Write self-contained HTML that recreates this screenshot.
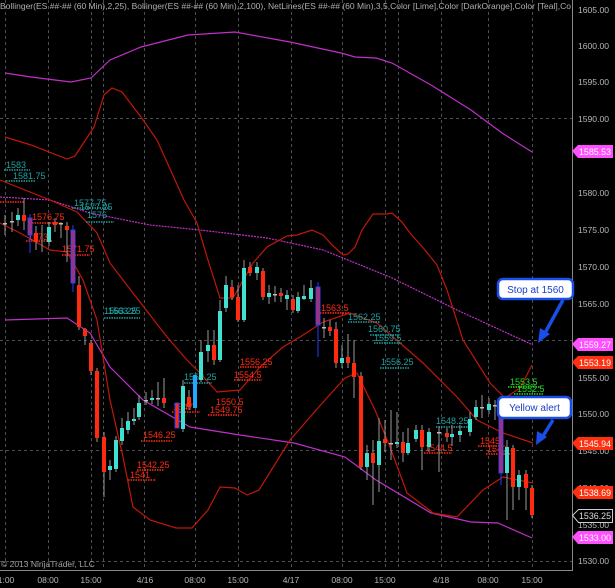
<!DOCTYPE html>
<html><head><meta charset="utf-8"><style>
html,body{margin:0;padding:0;background:#000;width:615px;height:588px;overflow:hidden}
svg{display:block}
text{font-family:"Liberation Sans",sans-serif}
</style></head><body>
<svg width="615" height="588" viewBox="0 0 615 588" xmlns="http://www.w3.org/2000/svg">
<rect width="615" height="588" fill="#000"/>
<g stroke="#4a4f55" stroke-width="1" stroke-dasharray="3,3">
<line x1="5.5" y1="0" x2="5.5" y2="570"/><line x1="48.5" y1="0" x2="48.5" y2="570"/><line x1="91.5" y1="0" x2="91.5" y2="570"/>
<line x1="103.5" y1="0" x2="103.5" y2="570"/><line x1="144.5" y1="0" x2="144.5" y2="570"/><line x1="195.5" y1="0" x2="195.5" y2="570"/>
<line x1="238.5" y1="0" x2="238.5" y2="570"/><line x1="291.5" y1="0" x2="291.5" y2="570"/><line x1="342.5" y1="0" x2="342.5" y2="570"/>
<line x1="385.5" y1="0" x2="385.5" y2="570"/><line x1="398.5" y1="0" x2="398.5" y2="570"/><line x1="441.5" y1="0" x2="441.5" y2="570"/>
<line x1="488.5" y1="0" x2="488.5" y2="570"/><line x1="532.5" y1="0" x2="532.5" y2="570"/>
<line x1="0" y1="118.5" x2="572" y2="118.5"/><line x1="0" y1="340.5" x2="572" y2="340.5"/><line x1="0" y1="450.5" x2="572" y2="450.5"/><line x1="0" y1="561.5" x2="572" y2="561.5"/>
</g>
<line x1="572.5" y1="0" x2="572.5" y2="571" stroke="#888"/>
<line x1="0" y1="570.5" x2="573" y2="570.5" stroke="#888"/>
<g fill="#b8b8b8" font-size="8.5">
<text x="578" y="13" textLength="31" lengthAdjust="spacingAndGlyphs">1605.00</text>
<text x="578" y="49" textLength="31" lengthAdjust="spacingAndGlyphs">1600.00</text>
<text x="578" y="85" textLength="31" lengthAdjust="spacingAndGlyphs">1595.00</text>
<text x="578" y="122" textLength="31" lengthAdjust="spacingAndGlyphs">1590.00</text>
<text x="578" y="196" textLength="31" lengthAdjust="spacingAndGlyphs">1580.00</text>
<text x="578" y="233" textLength="31" lengthAdjust="spacingAndGlyphs">1575.00</text>
<text x="578" y="270" textLength="31" lengthAdjust="spacingAndGlyphs">1570.00</text>
<text x="578" y="307" textLength="31" lengthAdjust="spacingAndGlyphs">1565.00</text>
<text x="578" y="381" textLength="31" lengthAdjust="spacingAndGlyphs">1555.00</text>
<text x="578" y="417" textLength="31" lengthAdjust="spacingAndGlyphs">1550.00</text>
<text x="578" y="454" textLength="31" lengthAdjust="spacingAndGlyphs">1545.00</text>
<text x="578" y="491" textLength="31" lengthAdjust="spacingAndGlyphs">1540.00</text>
<text x="578" y="528" textLength="31" lengthAdjust="spacingAndGlyphs">1535.00</text>
<text x="578" y="564" textLength="31" lengthAdjust="spacingAndGlyphs">1530.00</text>
</g>
<g fill="none" stroke-width="1.2">
<polyline stroke="#c030c8" points="5,73 31,77 71,82 91,78 110,60 141,47 188,35 235,32 290,42 341,53 355,57 376,58 392,63 431,85 471,110 502,133 532,152"/>
<polyline stroke="#c030c8" stroke-dasharray="2,1" points="0,197 50,200 90,213 150,225 200,230 267,238 300,245 323,250 390,277 457,310 533,345"/>
<polyline stroke="#c030c8" points="5,320 67,318 90,333 110,367 143,400 190,427 240,435 294,443 345,457 376,480 431,513 471,522 498,523 532,538"/>
<polyline stroke="#c01808" points="5,137 31,145 67,159 75,156 94,127 104,95 112,88 122,92 141,117 157,140 184,200 197,223 207,257 220,298 233,298 253,263 267,247 287,236 297,235 312,230 323,235 332,245 343,255 348,254 355,247 362,230 373,214 387,214 392,213 402,222 410,233 425,250 437,265 447,290 463,340 490,383 505,398 520,388 532,365"/>
<polyline stroke="#c01808" points="0,180 50,200 77,212 97,233 110,263 133,293 167,337 187,360 200,373 217,392 240,390 260,367 283,347 300,337 323,322 350,313 377,323 423,363 457,397 477,420 503,433 533,443"/>
<polyline stroke="#c01808" points="0,223 20,233 50,250 67,252 83,280 97,320 110,400 123,457 133,507 150,520 176,528 192,528 208,510 220,487 235,488 247,495 259,490 290,440 325,400 345,378 357,373 375,410 390,447 407,493 433,513 457,517 483,490 503,477 533,483"/>
</g>
<g font-size="9">
<g fill="#1fa0a0">
<text x="6" y="168">1583</text><text x="13" y="179">1581.75</text>
<text x="74" y="206">1577.75</text><text x="80" y="210">1577.25</text><text x="87" y="218">1576</text>
<text x="104" y="314">1563.25</text><text x="108" y="314">1563.25</text>
<text x="184" y="380">1552.25</text>
<text x="348" y="320">1562.25</text><text x="368" y="332">1560.75</text><text x="374" y="341">1559.5</text>
<text x="381" y="365">1556.25</text><text x="436" y="424">1548.25</text>
</g>
<g fill="#ff2a10">
<text x="32" y="220">1576.75</text><text x="28" y="240">1573</text><text x="62" y="252">1571.75</text>
<text x="240" y="365">1556.25</text><text x="234" y="378">1554.5</text><text x="216" y="405">1550.5</text><text x="210" y="413">1549.75</text>
<text x="173" y="410">1547</text><text x="143" y="438">1546.25</text><text x="137" y="468">1542.25</text><text x="130" y="478">1541</text>
<text x="321" y="311">1563.5</text><text x="425" y="451">1544.5</text><text x="480" y="444">1545.</text><text x="487" y="452">1540</text>
</g>
<g fill="#20e020"><text x="510" y="385">1553.5</text><text x="517" y="392">1552.5</text></g>
</g>
<g fill="none" stroke-width="1.5" stroke-dasharray="1.5,1">
<g stroke="#1fa0a0">
<line x1="4" y1="170" x2="30" y2="170"/><line x1="6" y1="181" x2="36" y2="181"/><line x1="72" y1="208" x2="110" y2="208"/><line x1="86" y1="222" x2="114" y2="222"/>
<line x1="104" y1="318" x2="140" y2="318"/><line x1="184" y1="383" x2="212" y2="383"/><line x1="348" y1="322" x2="380" y2="322"/><line x1="370" y1="335" x2="400" y2="335"/><line x1="374" y1="343" x2="402" y2="343"/><line x1="380" y1="368" x2="410" y2="368"/><line x1="436" y1="427" x2="468" y2="427"/>
</g>
<g stroke="#ff2a10">
<line x1="0" y1="202" x2="24" y2="202"/><line x1="32" y1="223" x2="60" y2="223"/><line x1="26" y1="241" x2="52" y2="241"/><line x1="62" y1="255" x2="90" y2="255"/>
<line x1="240" y1="367" x2="268" y2="367"/><line x1="234" y1="380" x2="262" y2="380"/><line x1="208" y1="415" x2="238" y2="415"/><line x1="172" y1="412" x2="200" y2="412"/>
<line x1="141" y1="441" x2="172" y2="441"/><line x1="137" y1="470" x2="164" y2="470"/><line x1="128" y1="480" x2="156" y2="480"/>
<line x1="320" y1="313" x2="350" y2="313"/><line x1="424" y1="453" x2="452" y2="453"/><line x1="478" y1="446" x2="500" y2="446"/><line x1="486" y1="454" x2="510" y2="454"/>
</g>
<g stroke="#20e020"><line x1="508" y1="387" x2="540" y2="387"/><line x1="514" y1="394" x2="544" y2="394"/></g>
</g>
<g stroke="#9a9a9a" stroke-width="1">
<line x1="5" y1="215" x2="5" y2="235"/><line x1="12" y1="212" x2="12" y2="232"/><line x1="18" y1="208" x2="18" y2="226"/><line x1="24" y1="198" x2="24" y2="230"/>
<line x1="36" y1="226" x2="36" y2="250"/><line x1="42" y1="225" x2="42" y2="252"/><line x1="49" y1="222" x2="49" y2="246"/><line x1="55" y1="218" x2="55" y2="232"/><line x1="61" y1="222" x2="61" y2="238"/><line x1="67" y1="222" x2="67" y2="262"/>
<line x1="79" y1="276" x2="79" y2="330"/><line x1="85" y1="328" x2="85" y2="345"/><line x1="91" y1="340" x2="91" y2="375"/><line x1="97" y1="368" x2="97" y2="442"/><line x1="104" y1="432" x2="104" y2="497"/>
<line x1="110" y1="460" x2="110" y2="480"/><line x1="116" y1="436" x2="116" y2="472"/><line x1="122" y1="418" x2="122" y2="445"/><line x1="128" y1="412" x2="128" y2="434"/><line x1="134" y1="408" x2="134" y2="425"/><line x1="139" y1="395" x2="139" y2="420"/>
<line x1="146" y1="392" x2="146" y2="405"/><line x1="152" y1="390" x2="152" y2="404"/><line x1="158" y1="382" x2="158" y2="406"/><line x1="164" y1="378" x2="164" y2="408"/>
<line x1="183" y1="380" x2="183" y2="432"/><line x1="189" y1="390" x2="189" y2="410"/><line x1="201" y1="340" x2="201" y2="382"/><line x1="208" y1="330" x2="208" y2="362"/><line x1="214" y1="330" x2="214" y2="365"/>
<line x1="220" y1="300" x2="220" y2="362"/><line x1="226" y1="276" x2="226" y2="312"/><line x1="232" y1="280" x2="232" y2="300"/><line x1="238" y1="285" x2="238" y2="322"/><line x1="244" y1="260" x2="244" y2="322"/>
<line x1="250" y1="262" x2="250" y2="276"/><line x1="257" y1="262" x2="257" y2="280"/><line x1="263" y1="268" x2="263" y2="300"/><line x1="269" y1="285" x2="269" y2="304"/><line x1="275" y1="286" x2="275" y2="302"/><line x1="281" y1="288" x2="281" y2="302"/><line x1="287" y1="290" x2="287" y2="310"/>
<line x1="293" y1="295" x2="293" y2="313"/><line x1="298" y1="292" x2="298" y2="313"/><line x1="304" y1="285" x2="304" y2="300"/><line x1="311" y1="280" x2="311" y2="302"/>
<line x1="324" y1="318" x2="324" y2="338"/><line x1="330" y1="320" x2="330" y2="336"/><line x1="336" y1="322" x2="336" y2="368"/><line x1="342" y1="345" x2="342" y2="368"/><line x1="348" y1="334" x2="348" y2="368"/><line x1="354" y1="340" x2="354" y2="398"/>
<line x1="361" y1="372" x2="361" y2="470"/><line x1="367" y1="445" x2="367" y2="480"/><line x1="373" y1="440" x2="373" y2="505"/><line x1="379" y1="418" x2="379" y2="492"/><line x1="385" y1="420" x2="385" y2="452"/><line x1="391" y1="410" x2="391" y2="460"/>
<line x1="397" y1="412" x2="397" y2="448"/><line x1="403" y1="432" x2="403" y2="462"/><line x1="408" y1="428" x2="408" y2="455"/><line x1="416" y1="425" x2="416" y2="442"/><line x1="422" y1="425" x2="422" y2="470"/><line x1="429" y1="428" x2="429" y2="452"/>
<line x1="439" y1="426" x2="439" y2="472"/><line x1="447" y1="428" x2="447" y2="442"/><line x1="452" y1="425" x2="452" y2="446"/><line x1="460" y1="425" x2="460" y2="442"/><line x1="470" y1="412" x2="470" y2="436"/><line x1="476" y1="400" x2="476" y2="420"/>
<line x1="482" y1="395" x2="482" y2="418"/><line x1="489" y1="398" x2="489" y2="414"/><line x1="495" y1="400" x2="495" y2="420"/><line x1="507" y1="440" x2="507" y2="520"/><line x1="513" y1="445" x2="513" y2="510"/><line x1="519" y1="470" x2="519" y2="500"/><line x1="526" y1="470" x2="526" y2="510"/><line x1="532" y1="485" x2="532" y2="518"/>
</g>
<g fill="#ff2a10">
<rect x="22" y="215" width="4" height="6"/><rect x="34" y="233" width="4" height="9"/><rect x="53" y="222" width="4" height="3"/><rect x="65" y="226" width="4" height="4"/>
<rect x="77" y="285" width="4" height="42"/><rect x="83" y="329" width="4" height="7"/><rect x="89" y="343" width="4" height="28"/><rect x="95" y="371" width="4" height="67"/><rect x="102" y="437" width="4" height="35"/>
<rect x="162" y="398" width="4" height="5"/><rect x="187" y="397" width="4" height="10"/><rect x="212" y="345" width="4" height="15"/><rect x="230" y="287" width="4" height="10"/><rect x="236" y="297" width="4" height="23"/>
<rect x="248" y="267" width="4" height="6"/><rect x="261" y="271" width="4" height="26"/><rect x="279" y="293" width="4" height="3"/><rect x="291" y="299" width="4" height="11"/>
<rect x="328" y="327" width="4" height="4"/><rect x="334" y="329" width="4" height="34"/><rect x="346" y="357" width="4" height="6"/><rect x="352" y="363" width="4" height="14"/><rect x="359" y="376" width="4" height="91"/>
<rect x="371" y="453" width="4" height="10"/><rect x="383" y="439" width="4" height="4"/><rect x="401" y="442" width="4" height="11"/><rect x="420" y="430" width="4" height="17"/><rect x="445" y="433" width="4" height="4"/>
<rect x="511" y="448" width="4" height="39"/><rect x="524" y="474" width="4" height="14"/><rect x="530" y="488" width="4" height="27"/>
</g>
<g fill="#ff2a10" stroke="#2040ff" stroke-width="1">
<rect x="28" y="218" width="4" height="17"/><rect x="71" y="230" width="4" height="53"/><rect x="175" y="403" width="4" height="25"/><rect x="316" y="287" width="4" height="38"/><rect x="499" y="418" width="4" height="55"/>
</g>
<line x1="30" y1="214" x2="30" y2="253" stroke="#2040ff"/><line x1="73" y1="225" x2="73" y2="292" stroke="#2040ff"/><line x1="318" y1="282" x2="318" y2="357" stroke="#2040ff"/><line x1="501" y1="410" x2="501" y2="485" stroke="#2040ff"/>
<g fill="#40e0d0">
<rect x="16" y="215" width="4" height="5"/><rect x="47" y="227" width="4" height="15"/><rect x="108" y="466" width="4" height="4"/><rect x="114" y="440" width="4" height="29"/><rect x="120" y="428" width="4" height="13"/>
<rect x="126" y="421" width="4" height="9"/><rect x="132" y="419" width="4" height="2"/><rect x="137" y="403" width="4" height="14"/><rect x="150" y="398" width="4" height="2"/><rect x="181" y="386" width="4" height="43"/>
<rect x="199" y="352" width="4" height="28"/><rect x="206" y="345" width="4" height="6"/><rect x="218" y="311" width="4" height="49"/><rect x="224" y="285" width="4" height="23"/><rect x="242" y="268" width="4" height="52"/>
<rect x="255" y="267" width="4" height="6"/><rect x="267" y="293" width="4" height="4"/><rect x="285" y="295" width="4" height="4"/><rect x="296" y="297" width="4" height="14"/><rect x="302" y="296" width="4" height="3"/><rect x="309" y="288" width="4" height="11"/>
<rect x="340" y="358" width="4" height="5"/><rect x="365" y="453" width="4" height="14"/><rect x="377" y="441" width="4" height="24"/><rect x="395" y="442" width="4" height="2"/><rect x="406" y="443" width="4" height="10"/>
<rect x="414" y="430" width="4" height="9"/><rect x="427" y="432" width="4" height="15"/><rect x="450" y="434" width="4" height="3"/><rect x="458" y="431" width="4" height="4"/><rect x="468" y="419" width="4" height="13"/>
<rect x="474" y="407" width="4" height="10"/><rect x="487" y="404" width="4" height="6"/><rect x="505" y="447" width="4" height="26"/><rect x="517" y="475" width="4" height="12"/>
</g>
<rect x="193" y="375" width="4" height="33" fill="#20a8ff"/>
<g fill="#bbb"><rect x="3" y="223" width="4" height="1.5"/><rect x="10" y="221" width="4" height="1.5"/><rect x="59" y="223" width="4" height="1.5"/><rect x="144" y="400" width="4" height="1.5"/><rect x="156" y="398" width="4" height="1.5"/><rect x="273" y="294" width="4" height="1.5"/><rect x="322" y="327" width="4" height="1.5"/><rect x="389" y="443" width="4" height="1.5"/><rect x="437" y="432" width="4" height="1.5"/><rect x="480" y="407" width="4" height="1.5"/><rect x="493" y="405" width="4" height="1.5"/></g>
<g font-size="9">
<path d="M572,151 L578,145 L613,145 L613,158 L578,158 Z" fill="#ff50ff"/><text x="579" y="155" fill="#fff" textLength="32" lengthAdjust="spacingAndGlyphs">1585.53</text>
<path d="M572,344 L578,338 L613,338 L613,351 L578,351 Z" fill="#ff50ff"/><text x="579" y="348" fill="#fff" textLength="32" lengthAdjust="spacingAndGlyphs">1559.27</text>
<path d="M572,362 L578,356 L613,356 L613,369 L578,369 Z" fill="#ff3010"/><text x="579" y="366" fill="#fff" textLength="32" lengthAdjust="spacingAndGlyphs">1553.19</text>
<path d="M572,443 L578,437 L613,437 L613,450 L578,450 Z" fill="#ff3010"/><text x="579" y="447" fill="#fff" textLength="32" lengthAdjust="spacingAndGlyphs">1545.94</text>
<path d="M572,492 L578,486 L613,486 L613,499 L578,499 Z" fill="#ff3010"/><text x="579" y="496" fill="#fff" textLength="32" lengthAdjust="spacingAndGlyphs">1538.69</text>
<path d="M572.5,515.5 L578.5,509.5 L612.5,509.5 L612.5,522.5 L578.5,522.5 Z" fill="#000" stroke="#ccc"/><text x="579" y="519" fill="#ddd" textLength="32" lengthAdjust="spacingAndGlyphs">1536.25</text>
<path d="M572,537 L578,531 L613,531 L613,544 L578,544 Z" fill="#ff50ff"/><text x="579" y="541" fill="#fff" textLength="32" lengthAdjust="spacingAndGlyphs">1533.00</text>
</g>
<g>
<path d="M563,300 L545,333" stroke="#1a4ee8" stroke-width="3.5" fill="none"/><path d="M538,343 L540,328 L550,334 Z" fill="#1a4ee8"/>
<path d="M553,420 L543,436" stroke="#1a4ee8" stroke-width="3.5" fill="none"/><path d="M536,445 L537,431 L547,437 Z" fill="#1a4ee8"/>
<rect x="498" y="279" width="75" height="20" rx="5" fill="#fff" stroke="#1a4ee8" stroke-width="2.5"/>
<text x="535.5" y="293" font-size="10" fill="#1a3ec8" text-anchor="middle">Stop at 1560</text>
<rect x="498" y="397" width="73" height="21" rx="5" fill="#fff" stroke="#1a4ee8" stroke-width="2.5"/>
<text x="534.5" y="411" font-size="10" fill="#1a3ec8" text-anchor="middle">Yellow alert</text>
</g>
<text x="0" y="9" font-size="8.5" fill="#b0b0b0" textLength="571" lengthAdjust="spacingAndGlyphs">Bollinger(ES ##-## (60 Min),2,25), Bollinger(ES ##-## (60 Min),2,100), NetLines(ES ##-## (60 Min),3,5,Color [Lime],Color [DarkOrange],Color [Teal],Co</text>
<text x="1" y="567" font-size="8.5" fill="#a0a0a0">© 2013 NinjaTrader, LLC</text>
<g font-size="8.5" fill="#b8b8b8" text-anchor="middle">
<text x="6" y="583">1:00</text><text x="48" y="583">08:00</text><text x="91" y="583">15:00</text><text x="145" y="583">4/16</text>
<text x="195" y="583">08:00</text><text x="238" y="583">15:00</text><text x="291" y="583">4/17</text><text x="342" y="583">08:00</text>
<text x="385" y="583">15:00</text><text x="441" y="583">4/18</text><text x="488" y="583">08:00</text><text x="532" y="583">15:00</text>
</g>
</svg>
</body></html>
